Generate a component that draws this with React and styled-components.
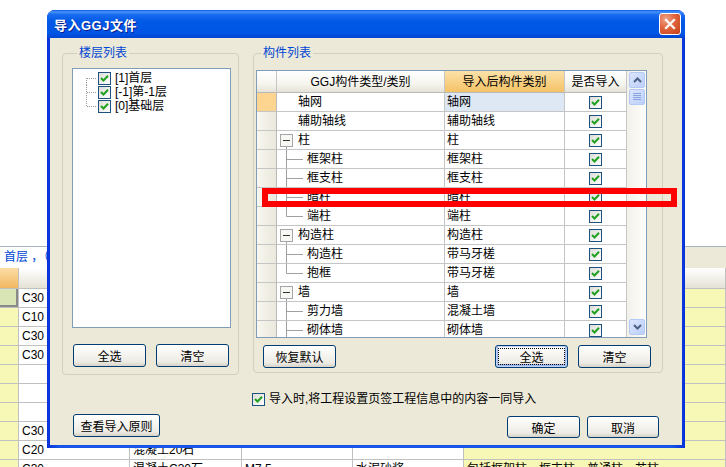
import React from "react";
import styled, { createGlobalStyle, css } from "styled-components";

const GlobalStyle = createGlobalStyle`
  html, body { margin: 0; padding: 0; background: #fff; }
  body {
    font-family: "Liberation Sans", "Noto Sans CJK SC", sans-serif;
    font-size: 12px;
    color: #000;
  }
  * { box-sizing: border-box; }
`;

const Screen = styled.div`
  position: relative;
  width: 726px;
  height: 467px;
  overflow: hidden;
  background: #fff;
`;

/* ---------- spreadsheet behind the dialog ---------- */

const Backdrop = styled.div`
  display: flex;
  flex-direction: column;
  padding-top: 246px;
`;

const PathBar = styled.div`
  height: 22px;
  display: flex;
  border-top: 1px solid #a7b3c4;
  background: #ece9d8;
`;

const PathField = styled.div`
  width: 150px;
  background: #fff;
  color: #0046d5;
  padding-left: 4px;
  line-height: 20px;
`;

const SheetRow = styled.div`
  display: grid;
  grid-template-columns: 19px 111px 112px 111px 111px 1fr;
  height: ${(p) => p.$h || 19}px;
`;

const SheetCell = styled.div`
  border-right: 1px solid #c0c0c0;
  border-bottom: 1px solid #c0c0c0;
  background: ${(p) => p.$bg || "#fff"};
  padding-left: 3px;
  line-height: 18px;
  white-space: nowrap;
  overflow: hidden;
  ${(p) =>
    p.$active &&
    css`
      box-shadow: inset -2px -2px 0 #8a8a8a;
    `}
`;

const SheetHead = styled(SheetCell)`
  background: ${(p) =>
    p.$corner
      ? "linear-gradient(#fcdda6, #f2b760)"
      : "linear-gradient(#ffffff, #e4e2d5)"};
`;

const YELLOW = "#f7f8b6";

const sheetRows = [
  ["C30", "", "", "", ""],
  ["C10", "", "", "", ""],
  ["C30", "", "", "", ""],
  ["C30", "", "", "", ""],
  ["", "", "", "", ""],
  ["", "", "", "", ""],
  ["", "", "", "", ""],
  ["C30", "", "", "", ""],
  ["C20", "混凝土20石", "", "", ""],
  ["C30", "混凝土C30石", "M7.5", "水泥砂浆", "包括框架柱、框支柱、普通柱、芯柱"],
];

/* ---------- dialog ---------- */

const Dialog = styled.div`
  position: absolute;
  left: 47px;
  top: 10px;
  width: 638px;
  height: 438px;
  display: flex;
  flex-direction: column;
  border-radius: 8px 8px 0 0;
  background: linear-gradient(90deg, #0831d9, #1655e6 2%, #1655e6 98%, #0831d9);
`;

const TitleBar = styled.div`
  height: 28px;
  flex: none;
  display: flex;
  align-items: center;
  justify-content: space-between;
  padding: 0 4px 0 7px;
  border-radius: 8px 8px 0 0;
  background: linear-gradient(
    #0a5ae8 0%,
    #4792f8 7%,
    #1a6cf0 16%,
    #0259e6 40%,
    #0055e5 82%,
    #0044d2 100%
  );
`;

const Title = styled.div`
  color: #fff;
  font-weight: bold;
  font-size: 13px;
  letter-spacing: 0.5px;
  text-shadow: 1px 1px 0 #0a1d8a;
`;

const CloseButton = styled.div`
  width: 22px;
  height: 22px;
  border: 1px solid #fff;
  border-radius: 3px;
  background: radial-gradient(circle at 30% 25%, #f0a488 0%, #e0643c 45%, #c5411a 100%);
  display: flex;
  align-items: center;
  justify-content: center;
`;

const Client = styled.div`
  flex: 1;
  margin: 0 3px 3px;
  background: #ece9d8;
  display: flex;
  flex-direction: column;
  padding: 9px 0 0 12px;
`;

const Groups = styled.div`
  display: flex;
  align-items: flex-start;
  gap: 14px;
`;

const GroupBox = styled.fieldset`
  margin: 0;
  min-width: 0;
  width: ${(p) => p.$w}px;
  border: 1px solid #d0d0bf;
  border-radius: 4px;
  padding: ${(p) => p.$pad};
`;

const Legend = styled.legend`
  margin-left: 5px;
  padding: 0 2px;
  color: #0046d5;
  font-size: 12px;
  line-height: 12px;
`;

const TreeBox = styled.div`
  height: 260px;
  border: 1px solid #7f9db9;
  background: #fff;
  padding-top: 2px;
`;

const TreeItem = styled.div`
  height: 14px;
  display: flex;
  align-items: center;
`;

const TreeLabel = styled.span`
  margin-left: 4px;
  line-height: 14px;
`;

const ButtonRow = styled.div`
  display: flex;
  gap: ${(p) => p.$gap || 0}px;
  margin-top: ${(p) => p.$mt || 0}px;
  margin-left: ${(p) => p.$ml || 0}px;
  margin-right: ${(p) => p.$mr || 0}px;
`;

const Spacer = styled.div`
  flex: 1;
`;

const Button = styled.button`
  width: ${(p) => p.$w || 73}px;
  height: ${(p) => p.$h || 23}px;
  margin-top: ${(p) => p.$mt || 0}px;
  padding: 0;
  font: inherit;
  font-size: 12px;
  color: #000;
  border: 1px solid #003c74;
  border-radius: 3px;
  background: linear-gradient(#ffffff 0%, #f5f4ef 45%, #ecebe5 80%, #d8d2c6 100%);
  ${(p) =>
    p.$focus &&
    css`
      box-shadow: inset 0 0 0 1px #c2d3f7, inset 0 -1px 0 2px #9db8ec;
      outline: 1px dotted #000;
      outline-offset: -4px;
    `}
`;

const CheckBoxFrame = styled.span`
  width: 13px;
  height: 13px;
  flex: none;
  border: 1px solid #1c5180;
  background: linear-gradient(135deg, #dcdcd7, #ffffff);
  display: inline-flex;
  align-items: center;
  justify-content: center;
`;

/* ---------- component table ---------- */

const TableFrame = styled.div`
  height: 268px;
  display: flex;
  border: 1px solid #7f9db9;
  background: #fff;
`;

const Grid = styled.div`
  flex: 1;
  overflow: hidden;
`;

const GridRow = styled.div`
  display: grid;
  grid-template-columns: 20px 168px 120px 62px;
  height: ${(p) => p.$h || 19}px;
`;

const Cell = styled.div`
  display: flex;
  align-items: center;
  border-right: 1px solid #c5c5c5;
  border-bottom: 1px solid #c5c5c5;
  background: ${(p) => p.$bg || "#fff"};
  padding-left: ${(p) => p.$pl || 0}px;
  justify-content: ${(p) => (p.$center ? "center" : "flex-start")};
  white-space: nowrap;
  overflow: hidden;
  line-height: 18px;
`;

const HeadCell = styled(Cell)`
  justify-content: center;
  background: ${(p) =>
    p.$hot
      ? "linear-gradient(#fbe2a9, #f4c266)"
      : "linear-gradient(#ffffff 0%, #f6f5ef 60%, #e6e4d8 100%)"};
  border-bottom-color: #b9b9b9;
`;

const RowHead = styled(Cell)`
  background: ${(p) =>
    p.$hot ? "#fed590" : "linear-gradient(90deg, #f7f6f0, #ebe9dc)"};
  border-right-color: #b9b9b9;
`;

const ScrollTrack = styled.div`
  width: 19px;
  flex: none;
  display: flex;
  flex-direction: column;
  gap: 1px;
  padding: 1px 1px 2px 2px;
  background: linear-gradient(90deg, #f2f1ea, #fefefb);
`;

const ScrollPiece = styled.div`
  width: 16px;
  height: 16px;
  border: 1px solid #b4c8f6;
  border-radius: 2px;
  background: linear-gradient(135deg, #dbe6fe, #bccff9);
  display: flex;
  align-items: center;
  justify-content: center;
`;

const Highlight = styled.div`
  position: absolute;
  left: 262px;
  top: 188px;
  width: 415px;
  height: 19px;
  border: 6px solid #ff0000;
`;

const ImportOption = styled.label`
  display: flex;
  align-items: center;
  gap: 4px;
  height: 13px;
  margin-top: 18px;
  padding-left: 190px;
  line-height: 13px;
`;

const Footer = styled.div`
  display: flex;
  margin-top: 8px;
  padding: 0 23px 0 11px;
  gap: 7px;
`;

/* ---------- small drawings ---------- */

const Check = () => (
  <CheckBoxFrame>
    <svg width="9" height="9" viewBox="0 0 9 9">
      <polyline points="1,4 3.5,6.5 8,1.8" fill="none" stroke="#21a121" strokeWidth="2" />
    </svg>
  </CheckBoxFrame>
);

const CloseX = () => (
  <svg width="12" height="12" viewBox="0 0 12 12">
    <path d="M2 2 L10 10 M10 2 L2 10" stroke="#fff" strokeWidth="2.2" strokeLinecap="square" />
  </svg>
);

const Arrow = ({ down }) => (
  <svg width="9" height="6" viewBox="0 0 9 6">
    <polyline
      points={down ? "1,1 4.5,4.5 8,1" : "1,5 4.5,1.5 8,5"}
      fill="none"
      stroke="#4d6185"
      strokeWidth="2"
    />
  </svg>
);

const Grip = () => (
  <svg width="8" height="8" viewBox="0 0 8 8">
    {[0.5, 2.5, 4.5, 6.5].map((y) => (
      <line key={y} x1="0" y1={y} x2="8" y2={y} stroke="#8aa4e0" strokeWidth="1" />
    ))}
  </svg>
);

const FloorLines = ({ pos }) => (
  <svg width="25" height="14" viewBox="0 0 25 14">
    <line
      x1="13.5"
      y1={pos === "first" ? 7 : 0}
      x2="13.5"
      y2={pos === "last" ? 7 : 14}
      stroke="#9a9a9a"
      strokeDasharray="1 1"
    />
    <line x1="14" y1="7.5" x2="24" y2="7.5" stroke="#9a9a9a" strokeDasharray="1 1" />
  </svg>
);

const Branch = ({ kind }) => {
  if (kind === "leaf") return <svg width="21" height="18" />;
  if (kind === "parent")
    return (
      <svg width="21" height="18" viewBox="0 0 21 18">
        <rect x="3.5" y="3.5" width="12" height="12" fill="#f7f7f4" stroke="#a5a5a5" />
        <line x1="6" y1="9.5" x2="13" y2="9.5" stroke="#333" />
        <line x1="9.5" y1="16" x2="9.5" y2="18" stroke="#a0a0a0" />
      </svg>
    );
  return (
    <svg width="30" height="18" viewBox="0 0 30 18">
      <line x1="9.5" y1="0" x2="9.5" y2={kind === "last" ? 9.5 : 18} stroke="#a0a0a0" />
      <line x1="9.5" y1="9.5" x2="26" y2="9.5" stroke="#a0a0a0" />
    </svg>
  );
};

/* ---------- data ---------- */

const floors = ["[1]首层", "[-1]第-1层", "[0]基础层"];

const parts = [
  { name: "轴网", to: "轴网", kind: "leaf", sel: true },
  { name: "辅助轴线", to: "辅助轴线", kind: "leaf" },
  { name: "柱", to: "柱", kind: "parent" },
  { name: "框架柱", to: "框架柱", kind: "child" },
  { name: "框支柱", to: "框支柱", kind: "child" },
  { name: "暗柱", to: "暗柱", kind: "child" },
  { name: "端柱", to: "端柱", kind: "last" },
  { name: "构造柱", to: "构造柱", kind: "parent" },
  { name: "构造柱", to: "带马牙槎", kind: "child" },
  { name: "抱框", to: "带马牙槎", kind: "last" },
  { name: "墙", to: "墙", kind: "parent" },
  { name: "剪力墙", to: "混凝土墙", kind: "child" },
  { name: "砌体墙", to: "砌体墙", kind: "child" },
];

export default function App() {
  return (
    <Screen>
      <GlobalStyle />

      <Backdrop>
        <PathBar>
          <PathField>首层 ，（</PathField>
        </PathBar>
        <SheetRow $h={21}>
          <SheetHead $corner />
          <SheetHead />
          <SheetHead />
          <SheetHead />
          <SheetHead />
          <SheetHead />
        </SheetRow>
        {sheetRows.map((r, i) => (
          <SheetRow key={i}>
            <SheetCell $bg={i === 0 ? "#d9e5b5" : YELLOW} $active={i === 0} />
            {r.map((v, j) => (
              <SheetCell key={j} $bg={j === 4 ? YELLOW : "#fff"}>
                {v}
              </SheetCell>
            ))}
          </SheetRow>
        ))}
      </Backdrop>

      <Dialog>
        <TitleBar>
          <Title>导入GGJ文件</Title>
          <CloseButton>
            <CloseX />
          </CloseButton>
        </TitleBar>

        <Client>
          <Groups>
            <GroupBox $w={177} $pad="9px 7px 7px 9px">
              <Legend>楼层列表</Legend>
              <TreeBox>
                {floors.map((f, i) => (
                  <TreeItem key={f}>
                    <FloorLines pos={i === 0 ? "first" : i === floors.length - 1 ? "last" : "mid"} />
                    <Check />
                    <TreeLabel>{f}</TreeLabel>
                  </TreeItem>
                ))}
              </TreeBox>
              <ButtonRow $mt={16} $gap={10} $ml={1}>
                <Button>全选</Button>
                <Button>清空</Button>
              </ButtonRow>
            </GroupBox>

            <GroupBox $w={410} $pad="11px 15px 4px 2px">
              <Legend>构件列表</Legend>
              <TableFrame>
                <Grid>
                  <GridRow $h={22}>
                    <HeadCell />
                    <HeadCell>GGJ构件类型/类别</HeadCell>
                    <HeadCell $hot>导入后构件类别</HeadCell>
                    <HeadCell>是否导入</HeadCell>
                  </GridRow>
                  {parts.map((p, i) => (
                    <GridRow key={i}>
                      <RowHead $hot={p.sel} />
                      <Cell>
                        <Branch kind={p.kind} />
                        {p.name}
                      </Cell>
                      <Cell $pl={2} $bg={p.sel ? "#dee8f5" : "#fff"}>
                        {p.to}
                      </Cell>
                      <Cell $center>
                        <Check />
                      </Cell>
                    </GridRow>
                  ))}
                </Grid>
                <ScrollTrack>
                  <ScrollPiece>
                    <Arrow />
                  </ScrollPiece>
                  <ScrollPiece>
                    <Grip />
                  </ScrollPiece>
                  <Spacer />
                  <ScrollPiece>
                    <Arrow down />
                  </ScrollPiece>
                </ScrollTrack>
              </TableFrame>
              <ButtonRow $mt={7} $ml={7} $mr={-4} $gap={10}>
                <Button>恢复默认</Button>
                <Spacer />
                <Button $focus>全选</Button>
                <Button>清空</Button>
              </ButtonRow>
            </GroupBox>
          </Groups>

          <ImportOption>
            <Check />
            <span>导入时,将工程设置页签工程信息中的内容一同导入</span>
          </ImportOption>

          <Footer>
            <Button $w={87}>查看导入原则</Button>
            <Spacer />
            <Button $mt={2} $h={22}>确定</Button>
            <Button $mt={2} $h={22} $w={72}>取消</Button>
          </Footer>
        </Client>
      </Dialog>

      <Highlight />
    </Screen>
  );
}
